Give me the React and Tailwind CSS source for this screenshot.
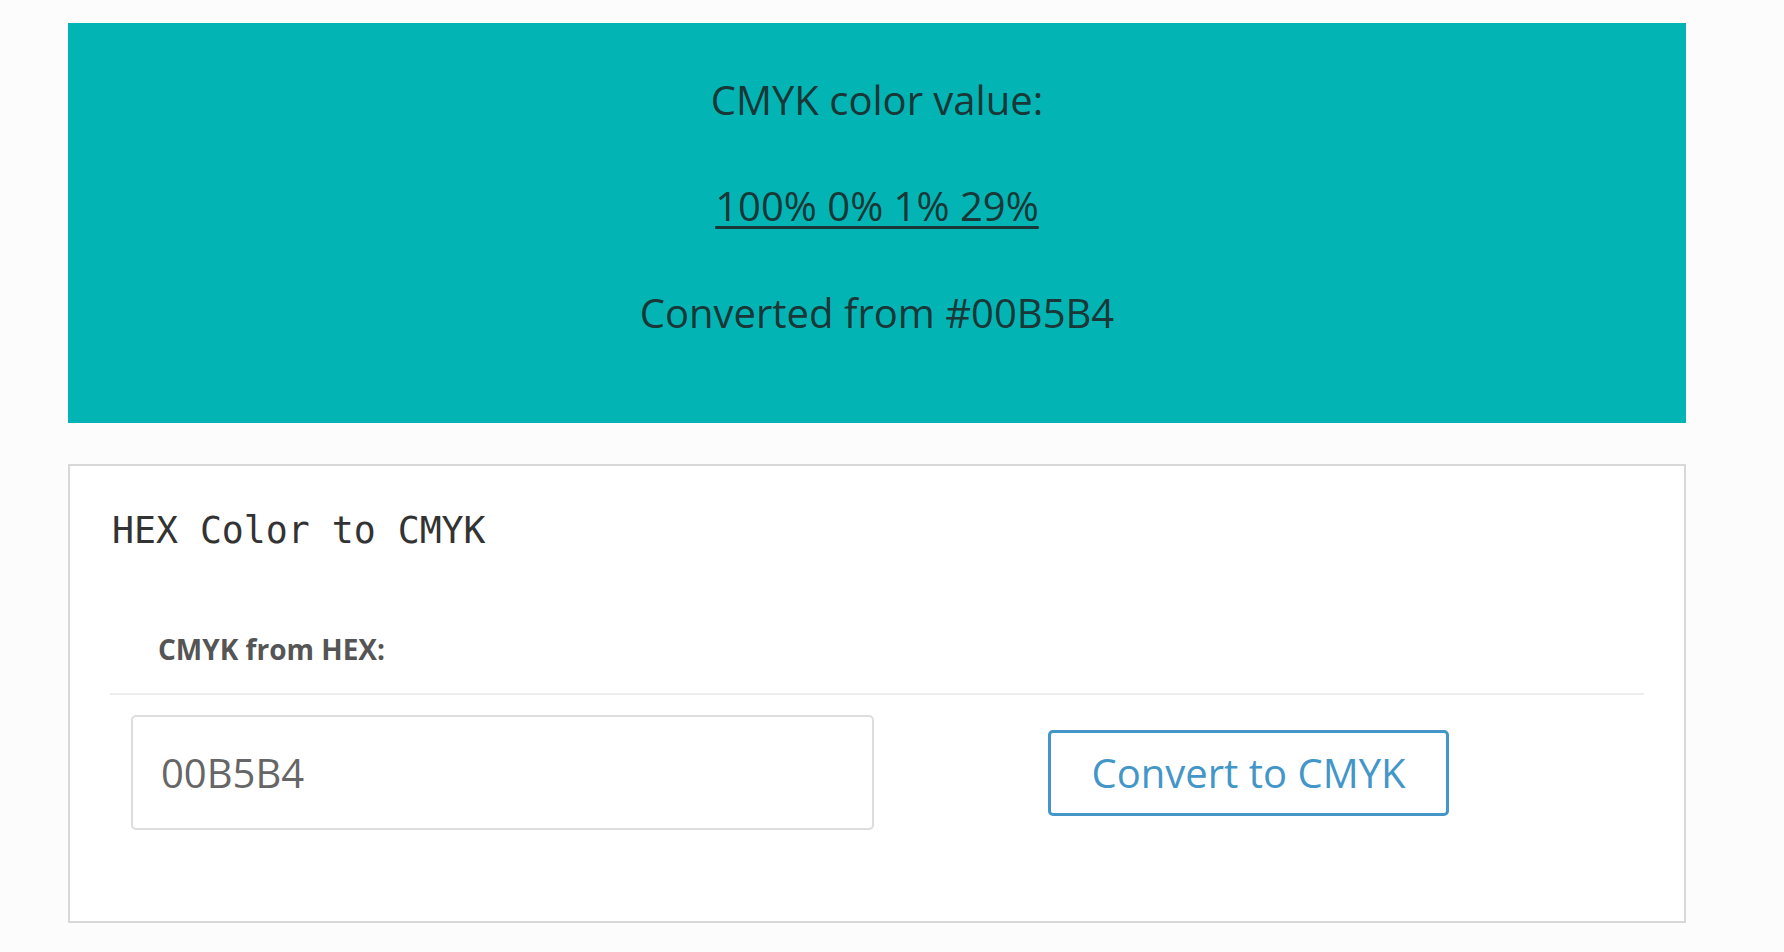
import { useState } from 'react'

const HEX = '00B5B4'

/**
 * HEX → CMYK converter card with the result banner on top.
 */
function toCmyk(hex) {
  const r = parseInt(hex.slice(0, 2), 16) / 255
  const g = parseInt(hex.slice(2, 4), 16) / 255
  const b = parseInt(hex.slice(4, 6), 16) / 255
  const k = 1 - Math.max(r, g, b)
  if (k === 1) return [0, 0, 0, 100]
  const c = (1 - r - k) / (1 - k)
  const m = (1 - g - k) / (1 - k)
  const y = (1 - b - k) / (1 - k)
  return [c, m, y, k].map((v) => Math.round(v * 100))
}

export default function App() {
  const [value, setValue] = useState(HEX)
  const cmyk = toCmyk(HEX)

  return (
    <div className="min-h-screen bg-[#fcfcfc] pt-[23px] pb-8 font-['Open_Sans',sans-serif]">
      <div className="ml-[68px] w-[1618px]">
        {/* Result banner */}
        <section className="h-[400px] bg-[#02b5b4] pt-[47px] text-center text-[40px] leading-[60px] text-[#1a3737]">
          <p>CMYK color value:</p>
          <p className="mt-[46px]">
            <a
              href="#"
              className="underline decoration-[3px] underline-offset-[5px]"
            >
              {cmyk.map((v) => `${v}%`).join(' ')}
            </a>
          </p>
          <p className="mt-[47px]">Converted from #{HEX}</p>
        </section>

        {/* Converter form */}
        <section className="mt-[41px] border-2 border-[#d8d8d8] bg-white px-10 pt-[43px] pb-[91px]">
          <h2 className="pl-[2px] font-['DejaVu_Sans_Mono',monospace] text-[36.5px] leading-[44px] text-[#333]">
            HEX Color to CMYK
          </h2>
          <h3 className="mt-[75px] pl-[48px] text-[28px] font-bold leading-[42px] text-[#555]">
            CMYK from HEX:
          </h3>
          <div className="mt-[23px] h-[2px] bg-[#eeeeee]" />
          <div className="mt-[20px] flex items-center">
            <input
              type="text"
              value={value}
              onChange={(e) => setValue(e.target.value)}
              className="ml-[21px] h-[115px] w-[743px] rounded-[5px] border-2 border-[#dddddd] bg-white pl-[28px] text-[40px] text-[#666] outline-none"
            />
            <button
              type="button"
              className="ml-[174px] h-[86px] w-[401px] rounded-[5px] border-[3px] border-[#4496c9] bg-white text-[40px] text-[#4396c8]"
            >
              Convert to CMYK
            </button>
          </div>
        </section>
      </div>
    </div>
  )
}
